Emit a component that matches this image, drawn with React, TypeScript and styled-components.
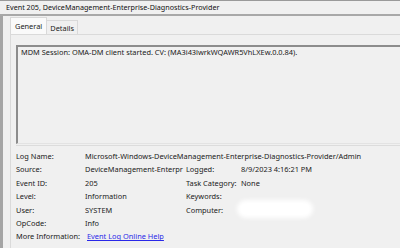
import styled, { createGlobalStyle } from "styled-components";

const GlobalStyle = createGlobalStyle`
	html, body {
		margin: 0;
		padding: 0;
		background: #f0f0f0;
	}
	body {
		font-family: "Noto Sans", "Open Sans", sans-serif;
		font-size: 7.4px;
		color: #1a1a1a;
		overflow: hidden;
	}
`;

interface Field {
	label: string;
	value?: string;
	label2?: string;
	value2?: string;
	link?: boolean;
	hidden?: boolean;
}

const fields: Field[] = [
	{ label: "Log Name:", value: "Microsoft-Windows-DeviceManagement-Enterprise-Diagnostics-Provider/Admin" },
	{ label: "Source:", value: "DeviceManagement-Enterpr", label2: "Logged:", value2: "8/9/2023 4:16:21 PM" },
	{ label: "Event ID:", value: "205", label2: "Task Category:", value2: "None" },
	{ label: "Level:", value: "Information", label2: "Keywords:", value2: "" },
	{ label: "User:", value: "SYSTEM", label2: "Computer:", hidden: true },
	{ label: "OpCode:", value: "Info" },
	{ label: "More Information:", value: "Event Log Online Help", link: true },
];

function App() {
	return (
		<>
			<GlobalStyle />
			<Window>
				<TitleBar>Event 205, DeviceManagement-Enterprise-Diagnostics-Provider</TitleBar>
				<Body>
					<TabStrip>
						<Tab active>General</Tab>
						<Tab>Details</Tab>
					</TabStrip>
					<Panel>
						<MessageBox>MDM Session: OMA-DM client started. CV: (MA3i43lwrkWQAWR5VhLXEw.0.0.84).</MessageBox>
						<Divider />
						<Grid>
							{fields.map((f) => (
								<Row key={f.label}>
									<Label>{f.label}</Label>
									{f.link ? (
										<Link href="#">{f.value}</Link>
									) : (
										<Value wide={!f.label2}>{f.value}</Value>
									)}
									{f.label2 && <Label>{f.label2}</Label>}
									{f.label2 && (f.hidden ? <Redacted><Blob /></Redacted> : <Value>{f.value2}</Value>)}
								</Row>
							))}
						</Grid>
					</Panel>
				</Body>
			</Window>
		</>
	);
}

const Window = styled.div`
	width: 400px;
	height: 248px;
	display: flex;
	flex-direction: column;
	background: #f0f0f0;
	border-top: 1px solid #9a9a9a;
	box-sizing: border-box;
`;

const TitleBar = styled.div`
	height: 13px;
	line-height: 12px;
	padding-left: 6px;
	font-size: 7.2px;
	color: #111;
	border-bottom: 2px solid #a8a8a8;
	white-space: nowrap;
`;

const Body = styled.div`
	flex: 1;
	display: flex;
	flex-direction: column;
	border-left: 3px solid #a5a5a5;
	padding-left: 7px;
`;

const TabStrip = styled.div`
	display: flex;
	align-items: flex-end;
	height: 17px;
	margin-top: 1px;
`;

interface TabProps {
	active?: boolean;
}

const Tab = styled.div<TabProps>`
	height: ${(p) => (p.active ? "17px" : "14px")};
	line-height: ${(p) => (p.active ? "17px" : "15px")};
	padding: 0 ${(p) => (p.active ? "4px" : "3px")};
	background: ${(p) => (p.active ? "#fafafa" : "#f0f0f0")};
	border: 1px solid #d9d9d9;
	border-bottom: none;
	box-sizing: border-box;
	margin-left: ${(p) => (p.active ? "0" : "-1px")};
	position: relative;
	z-index: ${(p) => (p.active ? 1 : 0)};
`;

const Panel = styled.div`
	flex: 1;
	display: flex;
	flex-direction: column;
	background: #f0f0f0;
	border-top: 1px solid #dadada;
	border-left: 1px solid #dadada;
	padding: 10px 0 0 5px;
`;

const MessageBox = styled.div`
	height: 96px;
	border-top: 2px solid #8c8c8c;
	border-left: 2px solid #8c8c8c;
	border-bottom: 1px solid #e3e3e3;
	padding: 0 3px;
	line-height: 10px;
	white-space: nowrap;
	background: #f0f0f0;
`;

const Divider = styled.div`
	height: 1px;
	background: #dcdcdc;
	margin-top: 1px;
`;

const Grid = styled.div`
	display: flex;
	flex-direction: column;
	padding-top: 4px;
`;

const Row = styled.div`
	display: grid;
	grid-template-columns: 69px 101px 55px auto;
	height: 13.4px;
	line-height: 13px;
	white-space: nowrap;
`;

const Label = styled.span`
	overflow: visible;
`;

interface ValueProps {
	wide?: boolean;
}

const Value = styled.span<ValueProps>`
	overflow: ${(p) => (p.wide ? "visible" : "hidden")};
	grid-column: ${(p) => (p.wide ? "span 3" : "auto")};
`;

const Link = styled.a`
	color: #2a28e8;
	text-decoration: underline;
	margin-left: 2px;
	grid-column: span 3;
`;

const Redacted = styled.span`
	position: relative;
`;

const Blob = styled.span`
	position: absolute;
	left: -4px;
	top: -4px;
	width: 76px;
	height: 18px;
	border-radius: 9px;
	background: #ffffff;
	filter: blur(2px);
`;

export default App;
